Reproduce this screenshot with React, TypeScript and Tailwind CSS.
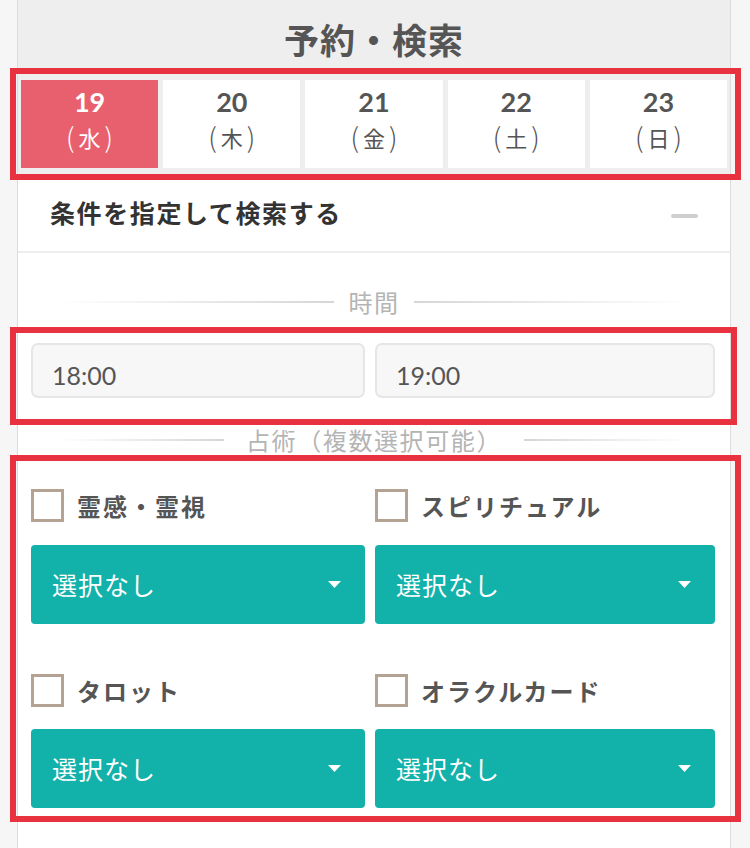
import React from "react";

const jp = { fontFamily: '"Noto Sans CJK JP", "Noto Sans", sans-serif' };
const num = { fontFamily: 'Lato, "Noto Sans CJK JP", sans-serif' };

const days = [
  { d: "19", w: "水", active: true },
  { d: "20", w: "木" },
  { d: "21", w: "金" },
  { d: "22", w: "土" },
  { d: "23", w: "日" },
];

function Divider({ label, width }: { label: string; width: string }) {
  return (
    <div className="flex h-[30px] items-center px-[40px]">
      <div className="h-[2px] flex-1 bg-gradient-to-r from-transparent to-[#d6d6d6]" />
      <div
        className={`text-center text-[24px] leading-[30px] tracking-[1.6px] text-[#b4b4b4] ${width}`}
        style={jp}
      >
        {label}
      </div>
      <div className="h-[2px] flex-1 bg-gradient-to-l from-transparent to-[#d6d6d6]" />
    </div>
  );
}

function Check({ label }: { label: string }) {
  return (
    <div className="flex h-[33px] items-center gap-[13px]">
      <div className="h-[33px] w-[33px] shrink-0 border-[3px] border-[#b4a393] bg-white" />
      <span className="text-[24px] font-bold tracking-[2px] text-[#555]" style={jp}>
        {label}
      </span>
    </div>
  );
}

function Select() {
  return (
    <div className="flex h-[79px] items-center justify-between rounded-[4px] bg-[#12b1aa] pl-[21px] pr-[24px]">
      <span className="text-[25px] tracking-[1px] text-white" style={jp}>
        選択なし
      </span>
      <svg width="13" height="7" viewBox="0 0 13 7">
        <path d="M0 0 H13 L6.5 7 Z" fill="#fff" />
      </svg>
    </div>
  );
}

export default function App() {
  return (
    <div className="relative flex h-[848px] w-[750px] overflow-hidden bg-[#f6f6f6]">
      <div className="ml-[17px] flex w-[714px] flex-col border-x border-[#dcdcdc] bg-white">
        {/* header */}
        <div className="bg-[#eeeeee] px-[3px] pb-[7px]">
          <div className="flex h-[80px] items-center justify-center pb-[2px]">
            <h1 className="text-[35px] font-bold tracking-[1px] text-[#555]" style={jp}>
              予約・検索
            </h1>
          </div>
          <div className="flex gap-[5px]">
            {days.map((x) => (
              <div
                key={x.d}
                className={`flex h-[88px] flex-1 flex-col items-center pt-[6px] ${
                  x.active ? "bg-[#e8606e] text-white" : "bg-white text-[#555]"
                }`}
              >
                <div className="text-[27px] font-bold leading-[32px]" style={num}>
                  {x.d}
                </div>
                <div
                  className="mt-[4px] flex items-center gap-[4px] text-[22px] leading-[30px]"
                  style={jp}
                >
                  <span className="text-[27px] font-light">(</span>
                  <span>{x.w}</span>
                  <span className="text-[27px] font-light">)</span>
                </div>
              </div>
            ))}
          </div>
        </div>

        {/* conditions row */}
        <div className="flex h-[78px] items-center justify-between border-b-2 border-[#eeeeee] pl-[32px] pr-[32px]">
          <span className="text-[25px] font-bold tracking-[1.6px] text-[#333]" style={jp}>
            条件を指定して検索する
          </span>
          <div className="mt-[6px] h-[4px] w-[27px] rounded-full bg-[#cfcfcf]" />
        </div>

        <div className="mt-[34px]">
          <Divider label="時間" width="w-[80px]" />
        </div>

        <div className="mt-[26px] grid grid-cols-[334px_340px] gap-[10px] px-[13px]">
          {["18:00", "19:00"].map((t) => (
            <div
              key={t}
              className="flex h-[55px] items-center rounded-[7px] border-2 border-[#e6e6e6] bg-[#f7f7f7] pl-[19px] pt-[10px] text-[25px] text-[#555]"
              style={num}
            >
              {t}
            </div>
          ))}
        </div>

        <div className="mt-[27px]">
          <Divider label="占術（複数選択可能）" width="w-[300px]" />
        </div>

        <div className="mt-[34px] grid grid-cols-[334px_340px] gap-x-[10px] px-[13px]">
          <Check label="霊感・霊視" />
          <Check label="スピリチュアル" />
          <div className="mt-[23px]">
            <Select />
          </div>
          <div className="mt-[23px]">
            <Select />
          </div>
          <div className="mt-[50px]">
            <Check label="タロット" />
          </div>
          <div className="mt-[50px]">
            <Check label="オラクルカード" />
          </div>
          <div className="mt-[22px]">
            <Select />
          </div>
          <div className="mt-[22px]">
            <Select />
          </div>
        </div>
      </div>

      {/* annotation boxes */}
      <div className="pointer-events-none absolute left-[10px] top-[68px] h-[112px] w-[731px] border-[6px] border-[#e8323f]" />
      <div className="pointer-events-none absolute left-[10px] top-[327px] h-[98px] w-[727px] border-[6px] border-[#e8323f]" />
      <div className="pointer-events-none absolute left-[10px] top-[455px] h-[367px] w-[731px] border-[6px] border-[#e8323f]" />
    </div>
  );
}
